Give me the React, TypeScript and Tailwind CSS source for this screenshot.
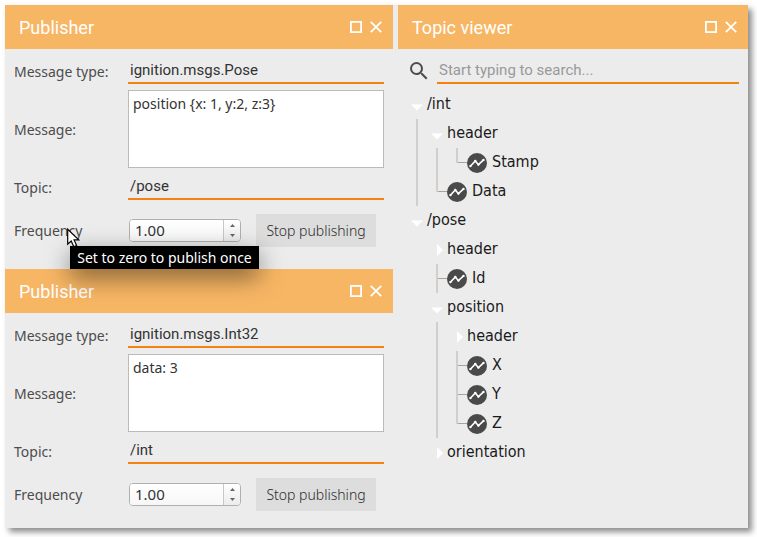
import { useId, useState } from "react";

type Guide = "none" | "bar" | "tee" | "elbow";

interface TreeRow {
  label: string;
  guides: Guide[];
  kind: "open" | "closed" | "leaf";
}

const rows: TreeRow[] = [
  { label: "/int", guides: [], kind: "open" },
  { label: "header", guides: ["bar"], kind: "open" },
  { label: "Stamp", guides: ["bar", "bar", "elbow"], kind: "leaf" },
  { label: "Data", guides: ["bar", "elbow"], kind: "leaf" },
  { label: "/pose", guides: [], kind: "open" },
  { label: "header", guides: ["none"], kind: "closed" },
  { label: "Id", guides: ["none", "tee"], kind: "leaf" },
  { label: "position", guides: ["none"], kind: "open" },
  { label: "header", guides: ["none", "bar"], kind: "closed" },
  { label: "X", guides: ["none", "bar", "tee"], kind: "leaf" },
  { label: "Y", guides: ["none", "bar", "tee"], kind: "leaf" },
  { label: "Z", guides: ["none", "bar", "elbow"], kind: "leaf" },
  { label: "orientation", guides: ["none"], kind: "closed" },
];

function PanelHeader({ title }: { title: string }) {
  return (
    <header className="flex h-11 items-center justify-between bg-[#f7b664] pr-[11px] pl-3.5 text-white">
      <h2 className="pt-0.5 font-[Roboto,sans-serif] text-lg">{title}</h2>
      <div className="flex gap-2">
        <button type="button" aria-label="Maximize">
          <svg className="block size-3" viewBox="0 0 12 12" fill="none" stroke="currentColor" strokeWidth="1.8">
            <rect x="0.9" y="0.9" width="10.2" height="10.2" />
          </svg>
        </button>
        <button type="button" aria-label="Close">
          <svg className="block size-3" viewBox="0 0 12 12" fill="none" stroke="currentColor" strokeWidth="1.8">
            <path d="M0.8 0.8 11.2 11.2M11.2 0.8 0.8 11.2" />
          </svg>
        </button>
      </div>
    </header>
  );
}

const lineInput =
  "h-[26px] w-full min-w-0 border-b-2 border-[#f58113] bg-transparent px-0.5 font-[Roboto,sans-serif] text-[15px] text-[#333] outline-none placeholder:text-[#999]";

function Publisher({
  type,
  message,
  topic,
  hint,
}: {
  type: string;
  message: string;
  topic: string;
  hint?: string;
}) {
  const id = useId();
  const [frequency, setFrequency] = useState(1);
  return (
    <section>
      <PanelHeader title="Publisher" />
      <div className="grid grid-cols-[114px_1fr] items-center gap-y-1.5 px-[9px] pt-[9px] pb-[17px] text-sm text-[#4d4d4d]">
        <label className="pt-0.5" htmlFor={id + "type"}>Message type:</label>
        <input className={lineInput} id={id + "type"} defaultValue={type} />
        <label className="pt-0.5" htmlFor={id + "message"}>Message:</label>
        <textarea
          className="block h-[78px] w-full resize-none border border-[#bdbab7] bg-white px-1 py-[3px] text-sm text-[#333] outline-none"
          id={id + "message"}
          defaultValue={message}
        />
        <label className="pt-0.5" htmlFor={id + "topic"}>Topic:</label>
        <input className={lineInput} id={id + "topic"} defaultValue={topic} />
        <div className="relative mt-2">
          <label htmlFor={id + "frequency"}>Frequency</label>
          {hint && (
            <>
              <div
                role="tooltip"
                className="absolute top-[25px] left-[56px] z-10 h-[23px] w-[189px] bg-black text-center leading-[23px] whitespace-nowrap text-white shadow-[0_8px_24px_rgba(0,0,0,0.5)]"
              >
                {hint}
              </div>
              <svg className="absolute top-[7px] left-[53px] z-20 h-5 w-[13px]" viewBox="0 0 13 20">
                <path
                  d="M0.7 1.2V16.2L4.2 13 6.8 18.8 9.6 17.5 7.1 11.9H11.8Z"
                  fill="white"
                  stroke="black"
                  strokeWidth="1.2"
                />
              </svg>
            </>
          )}
        </div>
        <div className="mt-2 flex items-center gap-[15px] pl-px">
          <div className="flex h-[23px] w-28 overflow-hidden rounded-[4px] border border-[#b3afab] bg-white">
            <input
              className="min-w-0 flex-1 bg-linear-to-b from-white to-[#f7f7f7] pl-[5px] text-[15px] text-[#333] outline-none"
              id={id + "frequency"}
              inputMode="decimal"
              value={frequency.toFixed(2)}
              onChange={(e) => setFrequency(Number(e.target.value) || 0)}
            />
            <div className="flex w-[17px] flex-col border-l border-[#c9c6c3] bg-linear-to-b from-white to-[#ececec]">
              <button
                type="button"
                aria-label="Increase frequency"
                className="flex flex-1 items-center justify-center"
                onClick={() => setFrequency(frequency + 1)}
              >
                <svg className="h-[3px] w-[5px]" viewBox="0 0 5 3"><path d="M0 3 2.5 0 5 3Z" fill="#666" /></svg>
              </button>
              <button
                type="button"
                aria-label="Decrease frequency"
                className="flex flex-1 items-center justify-center"
                onClick={() => setFrequency(Math.max(0, frequency - 1))}
              >
                <svg className="h-[3px] w-[5px]" viewBox="0 0 5 3"><path d="M0 0 2.5 3 5 0Z" fill="#666" /></svg>
              </button>
            </div>
          </div>
          <button type="button" className="h-[33px] w-[120px] bg-[#dddddd] font-light whitespace-nowrap text-[#2b2b2b]">
            Stop publishing
          </button>
        </div>
      </div>
    </section>
  );
}

function GuideCell({ guide }: { guide: Guide }) {
  return (
    <span className="flex h-full w-5 shrink-0 pl-[9px]">
      {(guide === "bar" || guide === "tee") && <span className="w-0.5 bg-[#d2cecb]" />}
      {guide === "elbow" && <span className="h-[15px] w-0.5 bg-[#d2cecb]" />}
      {(guide === "tee" || guide === "elbow") && (
        <span className="h-[15px] flex-1 border-b border-[#aaa39d]" />
      )}
    </span>
  );
}

function Row({ row }: { row: TreeRow }) {
  return (
    <li
      role="treeitem"
      aria-level={row.guides.length + 1}
      aria-expanded={row.kind === "leaf" ? undefined : row.kind === "open"}
      className="flex h-[29px] items-center"
    >
      {row.guides.map((guide, i) => (
        <GuideCell key={i} guide={guide} />
      ))}
      {row.kind === "leaf" ? (
        <svg className="mr-[5px] size-5 shrink-0" viewBox="0 0 20 20">
          <circle cx="10" cy="10" r="10" fill="#4a4a4a" />
          <path d="M3.3 13.2 8.3 7.9 11.4 11.7 16.6 6.8" fill="none" stroke="white" strokeWidth="1.6" />
          <g fill="white">
            <circle cx="3.4" cy="13.1" r="1.2" />
            <circle cx="8.3" cy="8" r="1.2" />
            <circle cx="11.4" cy="11.6" r="1.2" />
            <circle cx="16.5" cy="6.9" r="1.2" />
          </g>
        </svg>
      ) : (
        <button
          type="button"
          aria-label={(row.kind === "open" ? "Collapse " : "Expand ") + row.label}
          className="flex size-5 shrink-0 items-center justify-center"
        >
          <svg className="size-5" viewBox="0 0 20 20" fill="white">
            {row.kind === "open" ? <path d="M4 9.5H16L10 15.5Z" /> : <path d="M10 4V16L16 10Z" />}
          </svg>
        </button>
      )}
      <span className="pb-0.5">{row.label}</span>
    </li>
  );
}

function TopicViewer() {
  return (
    <section>
      <PanelHeader title="Topic viewer" />
      <div className="px-[9px] pt-[9px]">
        <div className="flex items-center gap-1.5">
          <svg className="size-6 shrink-0" viewBox="0 0 24 24" fill="#4d4d4d">
            <path d="M15.5 14h-.79l-.28-.27A6.471 6.471 0 0 0 16 9.5 6.5 6.5 0 1 0 9.5 16c1.61 0 3.09-.59 4.23-1.57l.27.28v.79l5 4.99L20.49 19l-4.99-5zm-6 0C7.01 14 5 11.99 5 9.5S7.01 5 9.5 5 14 7.01 14 9.5 11.99 14 9.5 14z" />
          </svg>
          <input
            className={lineInput}
            type="text"
            aria-label="Search topics"
            placeholder="Start typing to search..."
          />
        </div>
        <ul
          role="tree"
          className="mt-1.5 font-['DejaVu_Sans_Condensed','DejaVu_Sans',sans-serif] text-base text-[#1a1a1a]"
        >
          {rows.map((row, i) => (
            <Row key={i} row={row} />
          ))}
        </ul>
      </div>
    </section>
  );
}

export default function App() {
  return (
    <div className="min-h-screen bg-white pt-[5px] pr-[9px] pb-[9px] pl-[5px] font-['Noto_Sans',sans-serif]">
      <main className="grid grid-cols-[388fr_350fr] gap-[5px] bg-[#ececec] shadow-[4px_4px_6px_rgba(0,0,0,0.45)]">
        <div className="flex min-w-0 flex-col gap-[5px]">
          <Publisher
            type="ignition.msgs.Pose"
            message="position {x: 1, y:2, z:3}"
            topic="/pose"
            hint="Set to zero to publish once"
          />
          <Publisher type="ignition.msgs.Int32" message="data: 3" topic="/int" />
        </div>
        <TopicViewer />
      </main>
    </div>
  );
}
